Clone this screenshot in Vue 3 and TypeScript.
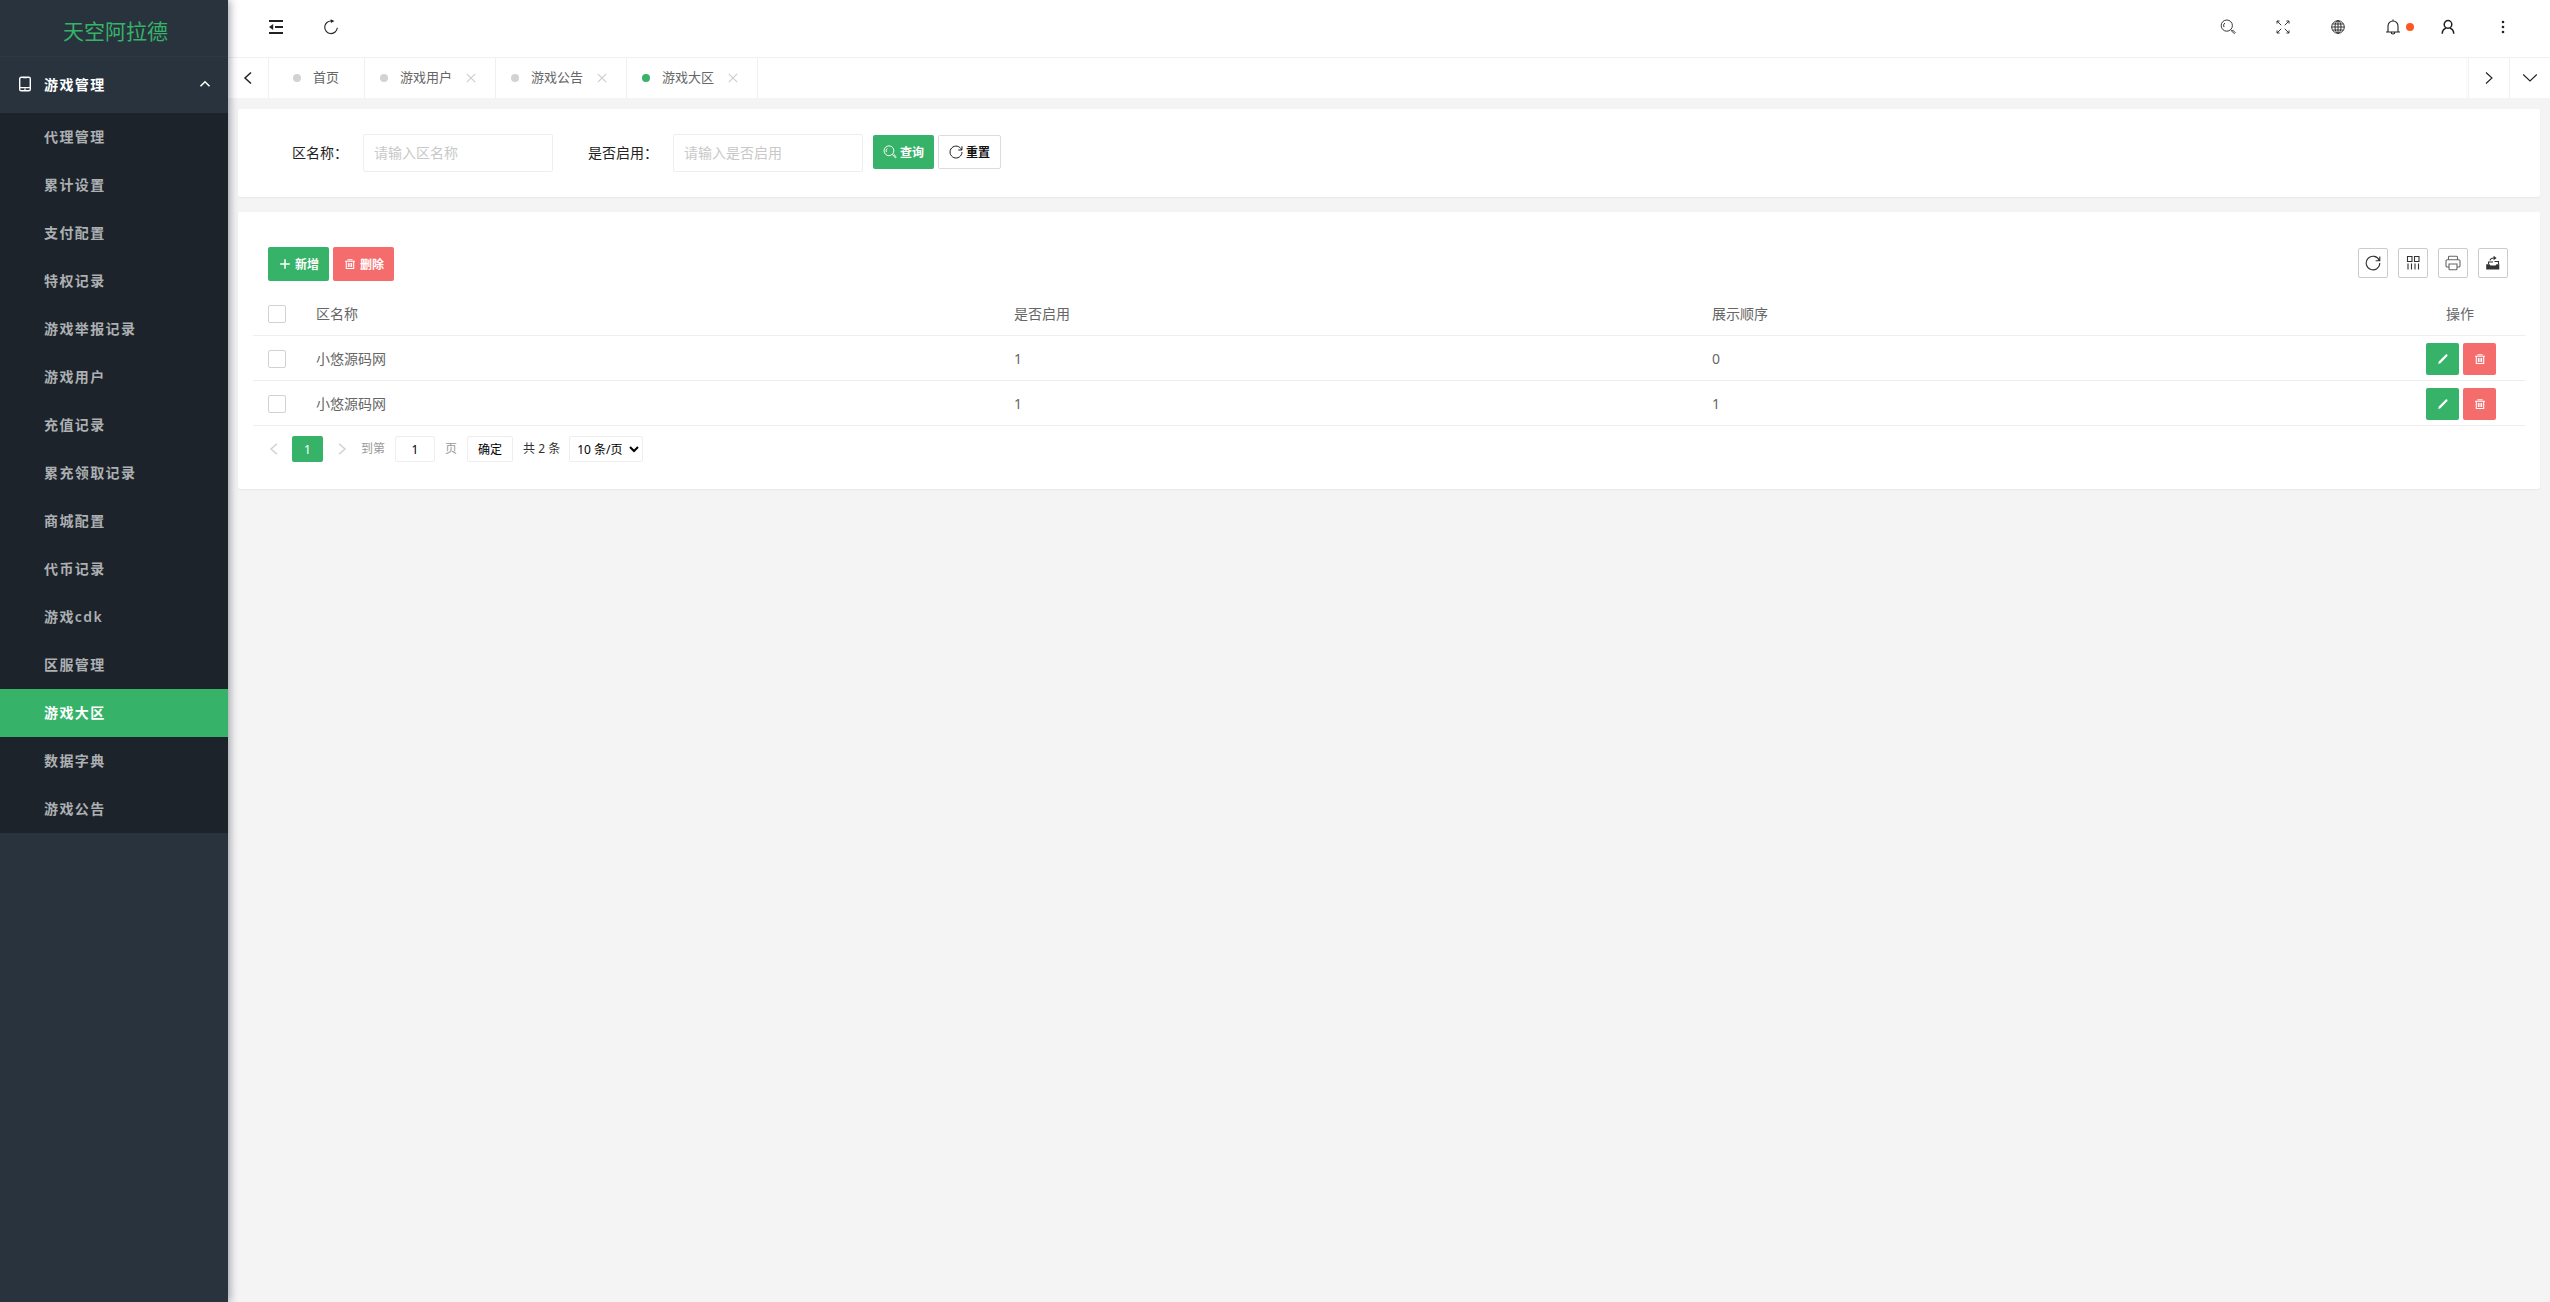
<script setup lang="ts">
import { ref } from 'vue'

interface Tab {
  title: string
  closable: boolean
}

interface Zone {
  id: number
  name: string
  enabled: number
  order: number
}

const menu: string[] = [
  '代理管理', '累计设置', '支付配置', '特权记录', '游戏举报记录',
  '游戏用户', '充值记录', '累充领取记录', '商城配置', '代币记录',
  '游戏cdk', '区服管理', '游戏大区', '数据字典', '游戏公告',
]

const tabs: Tab[] = [
  { title: '首页', closable: false },
  { title: '游戏用户', closable: true },
  { title: '游戏公告', closable: true },
  { title: '游戏大区', closable: true },
]

const rows: Zone[] = [
  { id: 1, name: '小悠源码网', enabled: 1, order: 0 },
  { id: 2, name: '小悠源码网', enabled: 1, order: 1 },
]

const current = ref('游戏大区')
const zoneName = ref('')
const enabled = ref('')
const page = ref('1')
const pageSize = ref('10')
</script>

<template>
  <div class="app">
    <aside class="side">
      <div class="logo">天空阿拉德</div>
      <nav>
        <button class="group" type="button">
          <svg class="i16" viewBox="0 0 16 16"><rect x="2.7" y="1.2" width="10.6" height="13.6" rx="1.6" /><path d="M3 11.6h10M6 1.6h4M7.4 13.2h1.2" /></svg>
          <span>游戏管理</span>
          <svg class="caret" viewBox="0 0 12 12"><path d="M1.500 8.300 6 3.800l4.500 4.500" /></svg>
        </button>
        <ul class="menu">
          <li v-for="item in menu" :key="item">
            <a href="#" :class="{ active: item === current }" @click.prevent="current = item">{{ item }}</a>
          </li>
        </ul>
      </nav>
    </aside>

    <div class="body">
      <header class="bar">
        <div class="tools">
          <button type="button" aria-label="收起菜单">
            <svg class="i16 heavy" viewBox="0 0 16 16"><path d="M1 2h14M7 8h8M1 14h14" /><path class="solid" d="M5.200 5v6L1 8z" /></svg>
          </button>
          <button type="button" aria-label="刷新">
            <svg class="i16" viewBox="0 0 16 16"><path d="M14.300 8.700A6.300 6.300 0 1 1 8.500 2" /><path class="solid" d="M7.600.200 11.400 2 8 4z" /></svg>
          </button>
        </div>
        <div class="tools">
          <button type="button" aria-label="搜索">
            <svg class="i16 thin" viewBox="0 0 16 16"><circle cx="6.800" cy="6.600" r="5.600" /><path d="M4 8.200a3.400 3.400 0 0 1 .8-4.200M10.800 10.700l1 1" /><path d="m11.600 12 1-1 2.600 2.600-1 1z" /></svg>
          </button>
          <button type="button" aria-label="全屏">
            <svg class="i16 thin" viewBox="0 0 16 16"><path d="m6.200 6.200-4-4M9.800 6.200l4-4M6.200 9.800l-4 4M9.800 9.800l4 4" /><path d="M2 4.600V2h2.600M11.400 2H14v2.600M2 11.400V14h2.600M11.400 14H14v-2.600" /></svg>
          </button>
          <button type="button" aria-label="语言">
            <svg class="i16 thin" viewBox="0 0 16 16"><circle cx="8" cy="8" r="6.300" /><ellipse cx="8" cy="8" rx="3" ry="6.300" /><path d="M8 1.600v12.800M1.600 8h12.800M2.600 5h10.800M2.600 11h10.800" /></svg>
          </button>
          <button type="button" class="bell" aria-label="消息">
            <svg class="i16" viewBox="0 0 16 16"><path d="M1 13h14M3 13V7a5 5 0 0 1 10 0v6M8 .6V2M6.200 13.200a1.800 1.800 0 0 0 3.600 0" /></svg>
            <i class="notice"></i>
          </button>
          <button type="button" aria-label="用户">
            <svg class="i16 mid" viewBox="0 0 16 16"><circle cx="8" cy="5.400" r="3.800" /><path d="M2.200 14.700c.2-3 1.800-5 4-5.700M13.800 14.700c-.2-3-1.800-5-4-5.700" /></svg>
          </button>
          <button type="button" aria-label="更多">
            <svg class="i16" viewBox="0 0 16 16"><g class="solid"><circle cx="8" cy="3" r="1.300" /><circle cx="8" cy="8" r="1.300" /><circle cx="8" cy="13" r="1.300" /></g></svg>
          </button>
        </div>
      </header>

      <div class="tabs">
        <button class="arrow first" type="button" aria-label="向左">
          <svg class="i16 mid" viewBox="0 0 16 16"><path d="M11 2.500 5 8l6 5.500" /></svg>
        </button>
        <div v-for="tab in tabs" :key="tab.title" class="tab" :class="{ on: tab.title === current, home: !tab.closable }">
          <i class="dot"></i>
          <a href="#" @click.prevent="current = tab.title">{{ tab.title }}</a>
          <button v-if="tab.closable" type="button" aria-label="关闭">
            <svg viewBox="0 0 10 10"><path d="m.8.8 8.400 8.400M9.200.8.8 9.200" /></svg>
          </button>
        </div>
        <span class="grow"></span>
        <button class="arrow" type="button" aria-label="向右">
          <svg class="i16" viewBox="0 0 16 16"><path d="m5 2.500 6 5.500-6 5.500" /></svg>
        </button>
        <button class="arrow" type="button" aria-label="展开">
          <svg class="i16" viewBox="0 0 16 16"><path d="m1.200 4.500 6.800 6.500 6.800-6.500" /></svg>
        </button>
      </div>

      <main>
        <form class="card search" @submit.prevent>
          <label for="zone">区名称：</label>
          <input id="zone" v-model="zoneName" class="field" type="text" placeholder="请输入区名称" />
          <label class="next" for="enabled">是否启用：</label>
          <input id="enabled" v-model="enabled" class="field" type="text" placeholder="请输入是否启用" />
          <div class="pair">
            <button class="btn green" type="submit">
              <svg class="i14" viewBox="0 0 16 16"><circle cx="6.800" cy="6.600" r="5.600" /><path d="M4 8.200a3.400 3.400 0 0 1 .8-4.200M10.800 10.700l1 1" /><path d="m11.600 12 1-1 2.600 2.600-1 1z" /></svg>
              查询
            </button>
            <button class="btn plain" type="reset">
              <svg class="i14" viewBox="0 0 16 16"><path d="M14.300 5.500A6.800 6.800 0 1 0 14.800 8M14.800 1.500v4.200h-4.200" /></svg>
              重置
            </button>
          </div>
        </form>

        <section class="card list">
          <div class="toolbar">
            <div class="pair">
              <button class="btn green" type="button">
                <svg class="i14" viewBox="0 0 14 14"><path class="mid" d="M7 2.200v9.600M2.200 7h9.600" /></svg>
                新增
              </button>
              <button class="btn red" type="button">
                <svg class="i14" viewBox="0 0 14 14"><path d="M2 4.200h10M4.500 2.700h5" /><path d="M3.300 4.200v7.300h7.400V4.200M5.400 6v4M7 6v4M8.600 6v4" /></svg>
                删除
              </button>
            </div>
            <div class="boxes">
              <button type="button" aria-label="刷新表格">
                <svg class="i16" viewBox="0 0 16 16"><path d="M14.300 5.500A6.800 6.800 0 1 0 14.800 8M14.800 1.500v4.200h-4.200" /></svg>
              </button>
              <button type="button" aria-label="筛选列">
                <svg class="i16" viewBox="0 0 16 16"><path d="M2.500 1.500H7v5H2.500zM9.500 1.500H14v5H9.500zM3 8.500v6M6.500 8.500v6M10 8.500v6M13.500 8.500v6" /></svg>
              </button>
              <button type="button" aria-label="打印">
                <svg class="i16 grey" viewBox="0 0 16 16"><path d="M3.500 4.500V2.200c0-.6.400-1 1-1h7c.6 0 1 .4 1 1v2.300M4 12H2.300C1.500 12 1 11.500 1 10.700V6c0-.8.500-1.300 1.300-1.300h11.400c.8 0 1.300.5 1.300 1.300v4.700c0 .8-.5 1.300-1.300 1.300H12M4 9h8v4.800c0 .6-.4 1-1 1H5c-.6 0-1-.4-1-1z" /></svg>
              </button>
              <button type="button" aria-label="导出">
                <svg class="i16" viewBox="0 0 16 16"><path class="solid" d="M1.200 9.300h3.300l1 1.200h5l1-1.200h2.800V14.500H1.200zM8.600.8 11.600 3 8.600 5.200z" /><path d="M5 5.500c.3-1.700 1.600-2.500 4-2.500M3.500 9.300V7H8M9.500 6.500H13.500v3" /></svg>
              </button>
            </div>
          </div>

          <table>
            <colgroup>
              <col class="c-check" />
              <col />
              <col />
              <col />
              <col class="c-ops" />
            </colgroup>
            <thead>
              <tr>
                <th class="check"><input type="checkbox" aria-label="全选" /></th>
                <th>区名称</th>
                <th>是否启用</th>
                <th>展示顺序</th>
                <th class="ops">操作</th>
              </tr>
            </thead>
            <tbody>
              <tr v-for="row in rows" :key="row.id">
                <td class="check"><input type="checkbox" aria-label="选择此行" /></td>
                <td>{{ row.name }}</td>
                <td>{{ row.enabled }}</td>
                <td>{{ row.order }}</td>
                <td class="ops">
                  <div class="pair center">
                    <button class="mini green" type="button" aria-label="编辑">
                      <svg class="i12" viewBox="0 0 12 12"><path class="solid" d="M1.200 10.900 1.800 8.400 8.800 1.600c.8-.8 2.300.7 1.600 1.500L3.400 10.200z" /></svg>
                    </button>
                    <button class="mini red" type="button" aria-label="删除">
                      <svg class="i14" viewBox="0 0 14 14"><path d="M2 4.200h10M4.500 2.700h5" /><path d="M3.300 4.200v7.300h7.400V4.200M5.400 6v4M7 6v4M8.600 6v4" /></svg>
                    </button>
                  </div>
                </td>
              </tr>
            </tbody>
          </table>

          <div class="pager">
            <button class="step" type="button" aria-label="上一页">
              <svg class="i12" viewBox="0 0 12 12"><path d="M9 .8 3 6l6 5.200" /></svg>
            </button>
            <button class="num" type="button">1</button>
            <button class="step" type="button" aria-label="下一页">
              <svg class="i12" viewBox="0 0 12 12"><path d="m3 .8 6 5.200-6 5.200" /></svg>
            </button>
            <label class="jump" for="page">到第</label>
            <input id="page" v-model="page" type="text" />
            <span class="unit">页</span>
            <button class="ok" type="button">确定</button>
            <span class="total">共 2 条</span>
            <select v-model="pageSize" aria-label="每页条数">
              <option value="10">10 条/页</option>
              <option value="20">20 条/页</option>
              <option value="50">50 条/页</option>
            </select>
          </div>
        </section>
      </main>
    </div>
  </div>
</template>

<style>
body {
  background: #f4f4f4;
}
</style>

<style scoped>
* {
  box-sizing: border-box;
}

.app {
  display: flex;
  min-height: 100vh;
  font: 14px/24px "Noto Sans", "Noto Sans CJK SC", sans-serif;
  color: #222;
}

button,
input,
select {
  font-family: inherit;
  margin: 0;
}

button {
  padding: 0;
  border: 0;
  background: none;
  color: inherit;
  cursor: pointer;
}

a {
  color: inherit;
  text-decoration: none;
}

svg {
  display: block;
  flex: none;
  fill: none;
  stroke: currentColor;
  stroke-width: 1.1;
}

.solid {
  fill: currentColor;
  stroke: none;
}

.i16 {
  width: 16px;
  height: 16px;
}

.i14 {
  width: 14px;
  height: 14px;
}

.i12 {
  width: 12px;
  height: 12px;
}

.thin {
  stroke-width: 0.9;
}

.mid {
  stroke-width: 1.5;
}

.heavy {
  stroke-width: 1.8;
}

/* sidebar */
.side {
  position: relative;
  z-index: 1;
  flex: none;
  width: 228px;
  background: #28333e;
  box-shadow: 2px 0 8px rgba(29, 35, 61, 0.4);
}

.logo {
  height: 57px;
  padding-top: 3px;
  line-height: 56px;
  font-size: 21px;
  text-align: center;
  text-indent: 3px;
  color: #36b368;
  border-bottom: 1px solid #2d3843;
}

.group {
  display: flex;
  align-items: center;
  gap: 11px;
  width: 100%;
  height: 56px;
  padding: 0 17px 2px;
  font-size: 14px;
  font-weight: 600;
  letter-spacing: 0.1em;
  color: #fff;
}

.group .i16 {
  stroke-width: 1.4;
}

.caret {
  width: 12px;
  height: 12px;
  margin-left: auto;
  stroke-width: 1.6;
}

.menu {
  margin: 0;
  padding: 0;
  list-style: none;
  background: #1c232a;
}

.menu a {
  display: block;
  height: 48px;
  padding-left: 44px;
  line-height: 48px;
  font-weight: 600;
  letter-spacing: 0.1em;
  color: #adb0b3;
}

.menu a.active {
  background: #36b368;
  color: #fff;
}

/* header */
.body {
  flex: 1;
  min-width: 0;
}

.bar {
  display: flex;
  justify-content: space-between;
  height: 57px;
  padding: 0 20px;
  background: #fff;
}

.tools {
  display: flex;
  height: 54px;
}

.tools button {
  display: flex;
  align-items: center;
  justify-content: center;
  width: 55px;
}

.bell {
  position: relative;
}

.notice {
  position: absolute;
  top: 23px;
  right: 6px;
  width: 8px;
  height: 8px;
  border-radius: 50%;
  background: #ff5722;
}

.tabs {
  display: flex;
  height: 41px;
  border-top: 1px solid #f0f0f0;
  background: #fff;
}

.arrow {
  display: flex;
  align-items: center;
  justify-content: center;
  width: 41px;
  border-left: 1px solid #f0f0f0;
}

.arrow.first {
  border-left: 0;
  border-right: 1px solid #f0f0f0;
}

.tab {
  display: flex;
  align-items: center;
  padding: 0 19px 0 15px;
  border-right: 1px solid #f0f0f0;
  font-size: 13px;
  color: #666;
}

.tab.home {
  padding: 0 25px 0 24px;
}

.tab a {
  padding-bottom: 2px;
}

.dot {
  width: 8px;
  height: 8px;
  margin-right: 12px;
  border-radius: 50%;
  background: #d2d2d2;
}

.on .dot {
  background: #36b368;
}

.tab button {
  margin-left: 14px;
  color: #ccc;
}

.tab button svg {
  width: 10px;
  height: 10px;
}

.grow {
  flex: 1;
  margin-right: 1px;
  border-right: 1px solid #f8f8f8;
}

/* content */
main {
  padding: 11px 10px;
}

.card {
  margin-bottom: 15px;
  border-radius: 2px;
  background: #fff;
  box-shadow: 0 1px 2px rgba(0, 0, 0, 0.06);
}

.search {
  display: flex;
  align-items: center;
  height: 88px;
  padding: 0 54px;
}

.search .next {
  margin-left: 35px;
}

.field {
  width: 190px;
  height: 38px;
  margin-left: 15px;
  padding: 0 10px 2px;
  border: 1px solid #eee;
  border-radius: 2px;
  font-size: 14px;
  color: #222;
}

.field::placeholder {
  color: #c8c8c8;
}

.pair {
  display: flex;
  gap: 4px;
}

.search .pair {
  margin: 0 0 2px 10px;
}

.center {
  justify-content: center;
}

.btn {
  display: flex;
  align-items: center;
  gap: 3px;
  height: 34px;
  padding: 0 10px;
  border-radius: 2px;
  font-size: 12px;
  font-weight: 700;
}

.green {
  background: #36b368;
  color: #fff;
}

.red {
  background: #f56c6c;
  color: #fff;
}

.plain {
  border: 1px solid #dcdcdc;
  color: #111;
}

.list {
  padding: 35px 15px 27px;
}

.toolbar {
  display: flex;
  align-items: center;
  justify-content: space-between;
  padding: 0 17px 10px 15px;
}

.boxes {
  display: flex;
  gap: 10px;
  padding-bottom: 2px;
}

.boxes button {
  display: flex;
  align-items: center;
  justify-content: center;
  width: 30px;
  height: 30px;
  border: 1px solid #ccc;
  border-radius: 2px;
  color: #333;
}

.boxes .grey {
  color: #666;
}

table {
  width: 100%;
  table-layout: fixed;
  border-collapse: separate;
  border-spacing: 0;
  color: #666;
}

.c-check {
  width: 48px;
}

.c-ops {
  width: 130px;
}

th,
td {
  height: 45px;
  padding: 2px 15px 0;
  border-bottom: 1px solid #eee;
  font-weight: 400;
  text-align: left;
}

th.ops {
  text-align: center;
}

td.ops {
  padding-left: 17px;
}

.check input {
  appearance: none;
  display: block;
  width: 18px;
  height: 18px;
  border: 1px solid #d2d2d2;
  border-radius: 2px;
  background: #fff;
}

.mini {
  display: flex;
  align-items: center;
  justify-content: center;
  width: 33px;
  height: 32px;
  border-radius: 2px;
}

.pager {
  display: flex;
  align-items: center;
  padding: 10px 15px 0 10px;
  font-size: 12px;
  color: #333;
}

.pager button {
  height: 26px;
  font-size: 12px;
}

.step {
  display: flex;
  align-items: center;
  justify-content: center;
  width: 21px;
  color: #d2d2d2;
}

.step svg {
  stroke-width: 1.5;
}

.pager .num {
  width: 31px;
  margin: 0 8px;
  border-radius: 2px;
  background: #36b368;
  color: #fff;
}

.jump,
.unit {
  color: #999;
}

.jump {
  margin: 0 10px 0 9px;
}

.pager input {
  width: 40px;
  height: 26px;
  padding: 0 3px;
  border: 1px solid #eee;
  border-radius: 2px;
  font-size: 12px;
  text-align: center;
}

.unit {
  margin: 0 10px;
}

.pager .ok {
  width: 46px;
  border: 1px solid #eee;
  border-radius: 2px;
  color: #000;
}

.total {
  margin: 0 9px 0 10px;
}

.pager select {
  height: 26px;
  padding: 0 3px;
  border: 1px solid #eee;
  border-radius: 2px;
  background: #fff;
  font-size: 12px;
  color: #000;
}
</style>
